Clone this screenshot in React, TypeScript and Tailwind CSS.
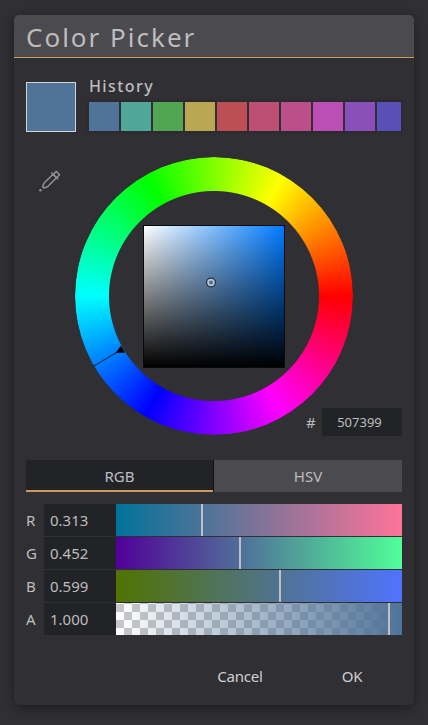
import React from "react";

const history = ["bg-[#507399]", "bg-[#50a699]", "bg-[#50a653]", "bg-[#baa653]", "bg-[#bc4f53]", "bg-[#bc4f73]", "bg-[#bc4f8b]", "bg-[#bc4fb6]", "bg-[#8a4fb8]", "bg-[#594fb8]"];

const channels = [
  { name: "R", value: "0.313", track: "bg-linear-to-r/srgb from-[#007399] to-[#ff7399]", thumb: "left-[85px]" },
  { name: "G", value: "0.452", track: "bg-linear-to-r/srgb from-[#500099] to-[#50ff99]", thumb: "left-[123px]" },
  { name: "B", value: "0.599", track: "bg-linear-to-r/srgb from-[#507300] to-[#5073ff]", thumb: "left-[163px]" },
  {
    name: "A",
    value: "1.000",
    track:
      "bg-[linear-gradient(to_right,#50739900,#507399),repeating-conic-gradient(#ffffff_0_25%,#c8c8c8_0_50%)] bg-[length:100%_100%,16px_16px] bg-[position:0_0,0_1px]",
    thumb: "left-[272px]",
  },
];

function Wheel() {
  return (
    <div className="relative size-[278px] shrink-0">
      <div className="size-full rounded-full bg-[conic-gradient(from_90deg,#f00,#f0f,#00f,#0ff,#0f0,#ff0,#f00)] [mask-image:radial-gradient(circle,transparent_104.5px,black_105.5px)]" />
      <div className="absolute left-[68px] top-[68px] h-[143px] w-[142px] border border-[#09090b] bg-[linear-gradient(to_top,#000,transparent),linear-gradient(to_right,#fff,#007bff)]" />
      <svg className="absolute inset-0" width="278" height="278" viewBox="75 157 278 278">
        <path d="M94 366 L119 351" stroke="#07345f" strokeWidth="1.3" />
        <path d="M121 345.5 L125 352.8 H115.8 Z" fill="#050505" />
        <circle cx="211" cy="282.5" r="4.3" fill="none" stroke="#202a35" strokeWidth="1.3" />
        <circle cx="211" cy="282.5" r="2.9" fill="none" stroke="#bcc4cb" strokeWidth="1.7" />
      </svg>
    </div>
  );
}

export default function App() {
  return (
    <div className="h-[725px] w-[428px] overflow-hidden bg-[#302f33] px-[14px] pt-[15px] font-['Noto_Sans','Open_Sans',sans-serif] text-[#bdbdbd]">
      <div className="flex h-[690px] w-[400px] flex-col overflow-hidden rounded-[5px] bg-[#302f33] shadow-[0_3px_12px_rgba(0,0,0,0.4)]">
        <header className="h-[43px] shrink-0 border-b border-[#cd9a5b] bg-[#4b4a4e] pl-[12px] text-[26px] leading-[44px] tracking-[2px]">
          Color Picker
        </header>

        <section className="flex gap-[13px] px-3 pt-[18px]">
          <div className="mt-[6px] size-[50px] border border-[#d4d5cf] bg-[#507399]" />
          <div className="w-[313px]">
            <h2 className="h-[26px] text-base font-medium leading-[20px] tracking-[1.4px]">History</h2>
            <div className="flex h-[29px] w-[312px] gap-[2px] overflow-hidden shadow-[0_0_2px_1px_#29282c]">
              {history.map((color) => (
                <div key={color} className={`w-[30px] shrink-0 ${color}`} />
              ))}
            </div>
          </div>
        </section>

        <section className="mt-[25px] flex h-[279px] px-3">
          <div className="w-[49px] pl-[12px] pt-[12px]">
            <svg width="24" height="24" viewBox="0 0 24 24" fill="none" stroke="#929194" strokeWidth="1.5" strokeLinejoin="round" strokeLinecap="round">
              <path d="M15 5.2 L18.5 8.7 L9.5 17.7 L5.8 19 L4.6 17.8 L5.9 14.3 Z" />
              <path d="M13.8 4 L19.7 9.8 M16 4.8 L18.2 2.3 L21.6 5.8 L19.3 8" />
              <circle cx="2.4" cy="21.2" r="1.2" fill="#929194" stroke="none" />
            </svg>
          </div>
          <div className="ml-px shrink-0">
            <Wheel />
          </div>
          <label className="-ml-[47px] mt-auto flex h-[28px] shrink-0 items-center gap-[5px]">
            <span className="w-[11px] text-[15px]">#</span>
            <span className="flex h-[28px] w-[80px] items-center justify-center bg-[#222327] pr-[5px] pt-px text-[13px]">507399</span>
          </label>
        </section>

        <nav className="mx-3 mt-[24px] flex h-[32px] shrink-0 gap-px bg-[#111113] text-[15px]">
          <button className="w-[187px] border-b-2 border-[#cd9a5b] bg-[#222327] pt-[2px]">RGB</button>
          <button className="w-[188px] bg-[#4b4a4e]">HSV</button>
        </nav>

        <section className="mx-3 mt-[12px] flex flex-col gap-px">
          {channels.map((c) => (
            <div key={c.name} className="flex h-[32px] items-center text-[15px]">
              <span className="w-[18px]">{c.name}</span>
              <span className="h-full w-[72px] bg-[#222327] pl-[6px] leading-[33px]">{c.value}</span>
              <div className={`relative h-full w-[286px] ${c.track}`}>
                <div className={`absolute top-0 h-full w-[2px] bg-[#c1c1c1] ${c.thumb}`} />
              </div>
            </div>
          ))}
        </section>

        <footer className="mt-[25px] flex h-[32px] justify-end px-[6px] text-[15px] tracking-[-0.2px] text-[#d0d0d0]">
          <button className="w-[112px]">Cancel</button>
          <button className="w-[112px]">OK</button>
        </footer>
      </div>
    </div>
  );
}
